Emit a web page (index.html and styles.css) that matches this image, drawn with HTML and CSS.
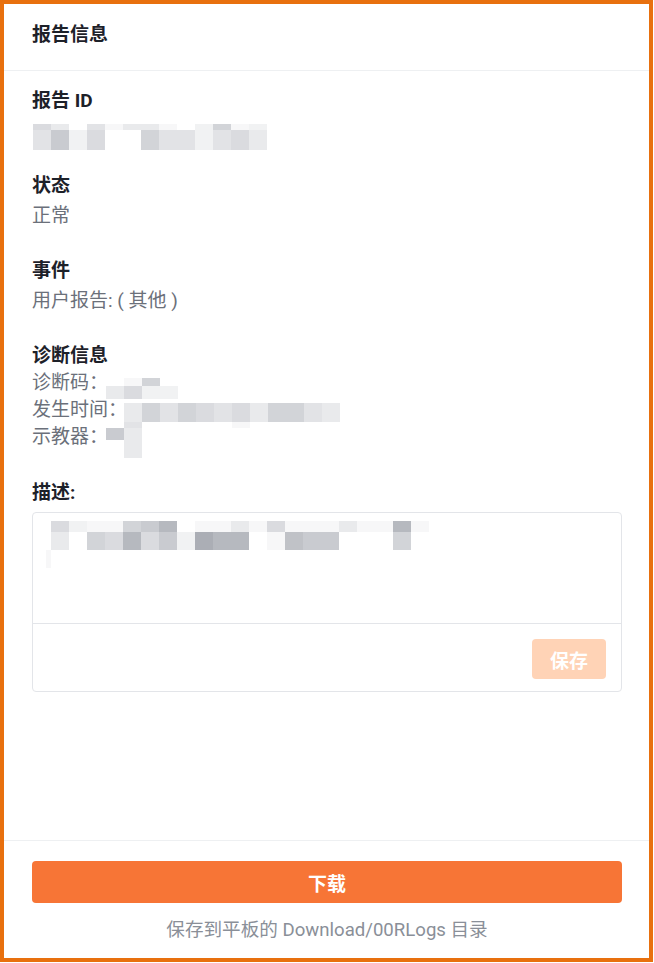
FILE: index.html
```html
<!DOCTYPE html>
<html lang="zh-CN">
<head>
<meta charset="utf-8">
<title>报告信息</title>
<link rel="stylesheet" href="styles.css">
</head>
<body>
<div class="frame">
  <header class="head">报告信息</header>
  <main class="body">
    <section class="sec">
      <div class="label">报告 ID</div>
      <div class="value id-val">
        <div class="mosaic">
          <div class="mrow h6"><i class="m e"></i><i class="m c"></i><i class="m"></i><i class="m d"></i><i class="m a"></i><i class="m c"></i><i class="m c"></i><i class="m a"></i><i class="m"></i><i class="m b"></i><i class="m f"></i><i class="m a"></i><i class="m b"></i></div>
          <div class="mrow h20"><i class="m d"></i><i class="m g"></i><i class="m b"></i><i class="m e"></i><i class="m"></i><i class="m"></i><i class="m f"></i><i class="m d"></i><i class="m d"></i><i class="m b"></i><i class="m d"></i><i class="m e"></i><i class="m c"></i></div>
        </div>
      </div>
    </section>
    <section class="sec">
      <div class="label">状态</div>
      <div class="value">正常</div>
    </section>
    <section class="sec">
      <div class="label">事件</div>
      <div class="value">用户报告: ( 其他 )</div>
    </section>
    <section class="sec">
      <div class="label">诊断信息</div>
      <div class="diag">
        <div class="drow">
          <span class="dlabel">诊断码：</span>
          <div class="dmosaic dm1">
            <div class="mrow h8"><i class="m"></i><i class="m a"></i><i class="m f"></i></div>
            <div class="mrow h13"><i class="m c"></i><i class="m e"></i><i class="m b"></i><i class="m b"></i></div>
          </div>
        </div>
        <div class="drow">
          <span class="dlabel">发生时间：</span>
          <div class="dmosaic dm2">
            <div class="mrow h19"><i class="m c"></i><i class="m f"></i><i class="m d"></i><i class="m f"></i><i class="m e"></i><i class="m d"></i><i class="m e"></i><i class="m c"></i><i class="m f"></i><i class="m f"></i><i class="m d"></i><i class="m c"></i></div>
            <div class="mrow h6"><i class="m d"></i><i class="m"></i><i class="m"></i><i class="m"></i><i class="m"></i><i class="m"></i><i class="m a"></i></div>
          </div>
        </div>
        <div class="drow">
          <span class="dlabel">示教器：</span>
          <div class="dmosaic dm3">
            <div class="mrow h12"><i class="m g"></i><i class="m c"></i></div>
            <div class="mrow h18"><i class="m"></i><i class="m c"></i></div>
          </div>
        </div>
      </div>
    </section>
    <section class="sec">
      <div class="label">描述:</div>
      <div class="box">
        <div class="box-text">
          <div class="mosaic desc">
            <div class="mrow h11"><i class="m e"></i><i class="m b"></i><i class="m a"></i><i class="m a"></i><i class="m f"></i><i class="m g"></i><i class="m i"></i><i class="m"></i><i class="m a"></i><i class="m a"></i><i class="m c"></i><i class="m a"></i><i class="m e"></i><i class="m a"></i><i class="m a"></i><i class="m a"></i><i class="m c"></i><i class="m a"></i><i class="m a"></i><i class="m i"></i><i class="m a"></i></div>
            <div class="mrow h18"><i class="m c"></i><i class="m"></i><i class="m f"></i><i class="m e"></i><i class="m i"></i><i class="m e"></i><i class="m g"></i><i class="m b"></i><i class="m j"></i><i class="m i"></i><i class="m i"></i><i class="m"></i><i class="m a"></i><i class="m h"></i><i class="m g"></i><i class="m g"></i><i class="m"></i><i class="m"></i><i class="m"></i><i class="m f"></i></div>
            <div class="mrow h18"><i class="tail a"></i></div>
          </div>
        </div>
        <div class="box-foot">
          <button class="save" type="button">保存</button>
        </div>
      </div>
    </section>
  </main>
  <footer class="foot">
    <button class="download" type="button">下载</button>
    <div class="hint">保存到平板的 Download/00RLogs 目录</div>
  </footer>
</div>
</body>
</html>
```
FILE: styles.css
```css
* { box-sizing: border-box; }
html, body { margin: 0; padding: 0; background: #fff; }
body {
  font-family: Roboto, "Noto Sans CJK SC", sans-serif;
  font-size: 19px;
  color: #1d2129;
}
.frame {
  width: 653px;
  height: 962px;
  border: 4px solid #e8700e;
  display: flex;
  flex-direction: column;
  background: #fff;
}
.head {
  padding: 19px 28px 23px;
  line-height: 24px;
  font-size: 19px;
  font-weight: 700;
  border-bottom: 1px solid #eef0f2;
}
.body {
  flex: 1;
  padding: 18px 27px 0 28px;
  display: flex;
  flex-direction: column;
  gap: 31px;
}
.sec { display: flex; flex-direction: column; }
.label { line-height: 24px; font-weight: 700; color: #1d2129; }
.value { margin-top: 6px; line-height: 24px; color: #6b707a; }
.id-val { height: 24px; padding-top: 5px; padding-left: 1px; }

.mosaic { display: flex; flex-direction: column; }
.mrow { display: flex; }
.m { display: block; width: 18px; flex: none; }
.tail { display: block; width: 5px; margin-left: -5px; }
.h6 { height: 6px; }
.h8 { height: 8px; }
.h11 { height: 11px; }
.h12 { height: 12px; }
.h13 { height: 13px; }
.h18 { height: 18px; }
.h19 { height: 19px; }
.h20 { height: 20px; }
.a { background: #f7f7f8; }
.b { background: #f1f2f3; }
.c { background: #e9eaec; }
.d { background: #e2e3e6; }
.e { background: #dadbdf; }
.f { background: #d2d4d8; }
.g { background: #c9cbd0; }
.h { background: #c0c2c7; }
.i { background: #b6b9bf; }
.j { background: #abaeb5; }

.diag { margin-top: 1px; display: flex; flex-direction: column; color: #6b707a; }
.drow { display: flex; align-items: flex-start; height: 27px; line-height: 27px; }
.dlabel { flex: none; }
.dmosaic { height: 0; overflow: visible; }
.dm1 { margin-top: 9px; margin-left: -2px; }
.dm2 { margin-top: 7px; margin-left: -3px; }
.dm3 { margin-top: 5px; margin-left: -2px; }

.box {
  margin-top: 7px;
  height: 180px;
  border: 1px solid #e3e5e9;
  border-radius: 4px;
  display: flex;
  flex-direction: column;
}
.box-text {
  height: 111px;
  padding: 8px 17px;
  border-bottom: 1px solid #e3e5e9;
}
.desc { padding-left: 1px; }
.box-foot {
  flex: 1;
  display: flex;
  justify-content: flex-end;
  align-items: flex-start;
  padding: 15px 15px 0 0;
}
.save {
  width: 74px;
  height: 40px;
  border: 0;
  border-radius: 4px;
  background: #ffd3b6;
  color: #fff;
  font-family: Roboto, "Noto Sans CJK SC", sans-serif;
  font-size: 19px;
  font-weight: 700;
  padding: 0;
}
.foot {
  border-top: 1px solid #eef0f2;
  padding: 20px 27px 16px 28px;
  display: flex;
  flex-direction: column;
}
.download {
  height: 42px;
  border: 0;
  border-radius: 4px;
  background: #f77536;
  color: #fff;
  font-family: Roboto, "Noto Sans CJK SC", sans-serif;
  font-size: 19px;
  font-weight: 700;
  padding: 0;
}
.hint {
  margin-top: 15px;
  line-height: 24px;
  font-size: 18.6px;
  text-align: center;
  color: #8a8f98;
}
```
